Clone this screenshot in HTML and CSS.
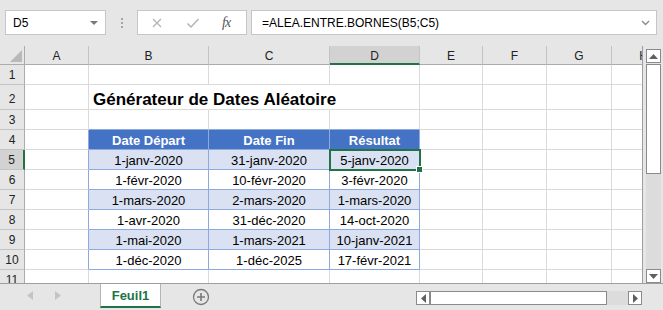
FILE: index.html
```html
<!DOCTYPE html>
<html lang="fr">
<head>
    <meta charset="UTF-8">
    <title>Générateur de Dates Aléatoire</title>
    <link rel="stylesheet" href="styles.css">
</head>
<body>
    <div class="app">
        <div class="formula-bar">
            <div class="name-box">
                <span>D5</span>
                <span class="caret"></span>
            </div>
            <div class="grip"><span></span><span></span><span></span></div>
            <div class="fx-buttons">
                <svg class="fx-icon" width="12" height="12" viewBox="0 0 12 12"><path d="M2 2 L10 10 M10 2 L2 10" stroke="#b4b4b4" stroke-width="1.3" fill="none"/></svg>
                <svg class="fx-icon" width="14" height="12" viewBox="0 0 14 12"><path d="M1.5 6.5 L5 10 L12.5 2" stroke="#b4b4b4" stroke-width="1.5" fill="none"/></svg>
                <span class="fx-label">fx</span>
            </div>
            <div class="formula-input">
                <span>=ALEA.ENTRE.BORNES(B5;C5)</span>
                <svg width="9" height="6" viewBox="0 0 9 6"><path d="M1 1 L4.5 4.5 L8 1" stroke="#8a8a8a" stroke-width="1.4" fill="none"/></svg>
            </div>
        </div>

        <div class="workspace">
            <div class="sheet">
                <div class="row col-heads">
                    <div class="corner"><svg width="12" height="12" viewBox="0 0 12 12"><path d="M12 0 L12 12 L0 12 Z" fill="#b8b8b8"/></svg></div>
                    <div class="col-head">A</div>
                    <div class="col-head">B</div>
                    <div class="col-head">C</div>
                    <div class="col-head active">D</div>
                    <div class="col-head">E</div>
                    <div class="col-head">F</div>
                    <div class="col-head">G</div>
                    <div class="col-head">H</div>
                </div>

                <div class="row">
                    <div class="row-head">1</div>
                    <div class="cell"></div><div class="cell"></div><div class="cell"></div><div class="cell"></div>
                    <div class="cell"></div><div class="cell"></div><div class="cell"></div><div class="cell"></div>
                </div>

                <div class="row tall">
                    <div class="row-head">2</div>
                    <div class="cell"></div>
                    <div class="cell title">Générateur de Dates Aléatoire</div>
                    <div class="cell"></div><div class="cell"></div><div class="cell"></div>
                    <div class="cell"></div><div class="cell"></div><div class="cell"></div>
                </div>

                <div class="row">
                    <div class="row-head">3</div>
                    <div class="cell"></div>
                    <div class="cell above"></div><div class="cell above"></div><div class="cell above"></div>
                    <div class="cell"></div><div class="cell"></div><div class="cell"></div><div class="cell"></div>
                </div>

                <div class="row">
                    <div class="row-head">4</div>
                    <div class="cell before"></div>
                    <div class="cell th">Date Départ</div>
                    <div class="cell th">Date Fin</div>
                    <div class="cell th">Résultat</div>
                    <div class="cell"></div><div class="cell"></div><div class="cell"></div><div class="cell"></div>
                </div>

                <div class="row">
                    <div class="row-head active">5</div>
                    <div class="cell before"></div>
                    <div class="cell td band">1-janv-2020</div>
                    <div class="cell td band">31-janv-2020</div>
                    <div class="cell td band selected">5-janv-2020</div>
                    <div class="cell"></div><div class="cell"></div><div class="cell"></div><div class="cell"></div>
                </div>

                <div class="row">
                    <div class="row-head">6</div>
                    <div class="cell before"></div>
                    <div class="cell td">1-févr-2020</div>
                    <div class="cell td">10-févr-2020</div>
                    <div class="cell td">3-févr-2020</div>
                    <div class="cell"></div><div class="cell"></div><div class="cell"></div><div class="cell"></div>
                </div>

                <div class="row">
                    <div class="row-head">7</div>
                    <div class="cell before"></div>
                    <div class="cell td band">1-mars-2020</div>
                    <div class="cell td band">2-mars-2020</div>
                    <div class="cell td band">1-mars-2020</div>
                    <div class="cell"></div><div class="cell"></div><div class="cell"></div><div class="cell"></div>
                </div>

                <div class="row">
                    <div class="row-head">8</div>
                    <div class="cell before"></div>
                    <div class="cell td">1-avr-2020</div>
                    <div class="cell td">31-déc-2020</div>
                    <div class="cell td">14-oct-2020</div>
                    <div class="cell"></div><div class="cell"></div><div class="cell"></div><div class="cell"></div>
                </div>

                <div class="row">
                    <div class="row-head">9</div>
                    <div class="cell before"></div>
                    <div class="cell td band">1-mai-2020</div>
                    <div class="cell td band">1-mars-2021</div>
                    <div class="cell td band">10-janv-2021</div>
                    <div class="cell"></div><div class="cell"></div><div class="cell"></div><div class="cell"></div>
                </div>

                <div class="row">
                    <div class="row-head">10</div>
                    <div class="cell before"></div>
                    <div class="cell td">1-déc-2020</div>
                    <div class="cell td">1-déc-2025</div>
                    <div class="cell td">17-févr-2021</div>
                    <div class="cell"></div><div class="cell"></div><div class="cell"></div><div class="cell"></div>
                </div>

                <div class="row short">
                    <div class="row-head">11</div>
                    <div class="cell"></div><div class="cell"></div><div class="cell"></div><div class="cell"></div>
                    <div class="cell"></div><div class="cell"></div><div class="cell"></div><div class="cell"></div>
                </div>
            </div>

            <div class="vscroll">
                <div class="sb-btn"><svg width="9" height="5" viewBox="0 0 9 5"><path d="M0 5 L4.5 0 L9 5 Z" fill="#606060"/></svg></div>
                <div class="sb-thumb v"></div>
                <div class="sb-track"></div>
                <div class="sb-btn"><svg width="9" height="5" viewBox="0 0 9 5"><path d="M0 0 L9 0 L4.5 5 Z" fill="#606060"/></svg></div>
            </div>
        </div>

        <div class="tabbar">
            <div class="tab-nav">
                <svg width="6" height="9" viewBox="0 0 6 9"><path d="M6 0 L6 9 L0 4.5 Z" fill="#c4c4c4"/></svg>
                <svg width="6" height="9" viewBox="0 0 6 9"><path d="M0 0 L0 9 L6 4.5 Z" fill="#c4c4c4"/></svg>
            </div>
            <div class="sheet-tab">Feuil1</div>
            <div class="add-sheet">
                <svg width="18" height="18" viewBox="0 0 18 18"><circle cx="9" cy="9" r="7.5" stroke="#7a7a7a" stroke-width="1.3" fill="none"/><path d="M9 5 V13 M5 9 H13" stroke="#7a7a7a" stroke-width="1.6"/></svg>
            </div>
            <div class="hscroll">
                <div class="sb-btn h"><svg width="5" height="9" viewBox="0 0 5 9"><path d="M5 0 L5 9 L0 4.5 Z" fill="#606060"/></svg></div>
                <div class="sb-thumb h"></div>
                <div class="sb-track"></div>
                <div class="sb-btn h"><svg width="5" height="9" viewBox="0 0 5 9"><path d="M0 0 L0 9 L5 4.5 Z" fill="#606060"/></svg></div>
            </div>
        </div>
    </div>
</body>
</html>
```

FILE: styles.css
```css
* {
    box-sizing: border-box;
}

body {
    margin: 0;
    background-color: #e6e6e6;
    font-family: "Liberation Sans", Arial, sans-serif;
    color: #000;
}

.app {
    width: 663px;
    height: 310px;
    display: flex;
    flex-direction: column;
    overflow: hidden;
}

/* Barre de formule */
.formula-bar {
    height: 46px;
    flex-shrink: 0;
    display: flex;
    align-items: flex-start;
    padding: 10px 0 0 5px;
}

.name-box {
    width: 101px;
    height: 25px;
    background: #fff;
    border: 1px solid #c6c6c6;
    display: flex;
    align-items: center;
    justify-content: space-between;
    padding: 0 7px 0 7px;
    font-size: 12px;
}

.caret {
    width: 0;
    height: 0;
    border-left: 4px solid transparent;
    border-right: 4px solid transparent;
    border-top: 4px solid #7a7a7a;
}

.grip {
    width: 31px;
    height: 25px;
    display: flex;
    flex-direction: column;
    align-items: center;
    justify-content: center;
    gap: 2px;
}

.grip span {
    width: 2px;
    height: 2px;
    background: #a6a6a6;
}

.fx-buttons {
    width: 110px;
    height: 25px;
    background: #fff;
    border: 1px solid #c6c6c6;
    display: flex;
    align-items: center;
    padding: 0 0 0 13px;
    gap: 23px;
}

.fx-label {
    font-family: "Liberation Serif", serif;
    font-style: italic;
    font-size: 14px;
    color: #555;
    margin-left: -1px;
    letter-spacing: -1px;
}

.formula-input {
    width: 406px;
    height: 25px;
    margin-left: 4px;
    background: #fff;
    border: 1px solid #c6c6c6;
    display: flex;
    align-items: center;
    justify-content: space-between;
    padding: 0 6px 0 10px;
    font-size: 12px;
}

/* Feuille */
.workspace {
    height: 237px;
    flex-shrink: 0;
    display: flex;
}

.sheet {
    width: 643px;
    flex-shrink: 0;
    background: #fff;
    border-right: 1px solid #9e9e9e;
    overflow: hidden;
}

.row {
    display: grid;
    grid-template-columns: 25px 64px 120px 121px 90px 63px 64px 65px 64px;
    width: 676px;
    height: 20px;
}

.row.tall {
    height: 25px;
}

.row.short {
    height: 13px;
    overflow: hidden;
}

.col-heads {
    height: 19px;
}

.corner {
    background: #e6e6e6;
    border-right: 1px solid #ababab;
    border-bottom: 1px solid #ababab;
    display: flex;
    align-items: flex-end;
    justify-content: flex-end;
    padding: 0 2px 2px 0;
}

.col-head {
    background: #e6e6e6;
    border-bottom: 1px solid #ababab;
    border-right: 1px solid #c4c4c4;
    display: flex;
    align-items: center;
    justify-content: center;
    font-size: 12px;
    color: #222;
    padding-top: 2px;
}

.col-head.active {
    background: #d2d2d2;
    border-bottom: 2px solid #217346;
}

.row-head {
    background: #e6e6e6;
    border-right: 1px solid #ababab;
    border-bottom: 1px solid #c4c4c4;
    display: flex;
    align-items: center;
    justify-content: center;
    font-size: 12px;
    color: #222;
    padding-top: 1px;
}

.row.tall .row-head {
    align-items: flex-end;
    padding-bottom: 3px;
}

.row.short .row-head {
    align-items: flex-start;
    padding-top: 3px;
}

.row-head.active {
    background: #d2d2d2;
    border-right: 2px solid #217346;
}

.cell {
    border-right: 1px solid #dadada;
    border-bottom: 1px solid #dadada;
    font-size: 13px;
    white-space: nowrap;
    display: flex;
    align-items: center;
    padding-top: 2px;
}

.title {
    font-size: 17px;
    line-height: 1;
    font-weight: bold;
    align-items: flex-end;
    padding: 0 0 1px 4px;
    overflow: visible;
    border-right-color: transparent;
}

.title + .cell {
    border-right-color: transparent;
}

.above {
    border-bottom-color: #8ea9db;
}

.before {
    border-right-color: #8ea9db;
}

.th {
    background: #4472c4;
    color: #fff;
    font-weight: bold;
    justify-content: center;
    border-right-color: #8ea9db;
    border-bottom-color: #8ea9db;
}

.td {
    justify-content: center;
    border-right-color: #8ea9db;
    border-bottom-color: #8ea9db;
}

.td.band {
    background: #d9e1f2;
}

.selected {
    position: relative;
    outline: 2px solid #217346;
    outline-offset: -1px;
}

.selected::after {
    content: "";
    position: absolute;
    right: -4px;
    bottom: -4px;
    width: 5px;
    height: 5px;
    background: #217346;
    border: 1px solid #fff;
}

/* Barres de défilement */
.vscroll {
    width: 20px;
    display: flex;
    flex-direction: column;
    padding: 3px 2px 0 3px;
}

.sb-btn {
    height: 14px;
    flex-shrink: 0;
    background: #fff;
    border: 1px solid #8a8a8a;
    display: flex;
    align-items: center;
    justify-content: center;
}

.sb-btn.h {
    width: 14px;
    height: auto;
}

.sb-thumb {
    background: #fff;
    border: 1px solid #8a8a8a;
    flex-shrink: 0;
}

.sb-thumb.v {
    height: 110px;
    margin-top: 1px;
}

.sb-thumb.h {
    width: 177px;
}

.sb-track {
    flex: 1;
    background: #dcdcdc;
}

/* Onglets */
.tabbar {
    height: 27px;
    flex-shrink: 0;
    border-top: 1px solid #9e9e9e;
    display: flex;
    align-items: flex-start;
}

.tab-nav {
    width: 100px;
    height: 22px;
    display: flex;
    align-items: center;
    padding-left: 27px;
    gap: 22px;
}

.sheet-tab {
    width: 61px;
    height: 24px;
    background: #fff;
    border-left: 1px solid #b4b4b4;
    border-right: 1px solid #b4b4b4;
    border-bottom: 2px solid #217346;
    color: #217346;
    font-weight: bold;
    font-size: 13px;
    display: flex;
    align-items: center;
    justify-content: center;
    padding-top: 1px;
}

.add-sheet {
    width: 80px;
    height: 26px;
    display: flex;
    align-items: center;
    padding-left: 31px;
}

.hscroll {
    width: 226px;
    height: 14px;
    margin: 7px 0 0 175px;
    display: flex;
}
```
